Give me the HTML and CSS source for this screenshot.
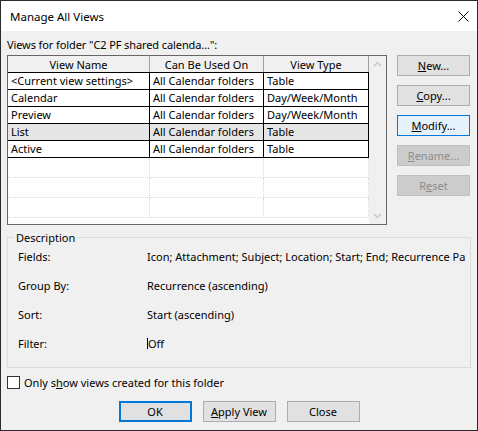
FILE: index.html
```html
<!DOCTYPE html>
<html>
<head>
    <title>Manage All Views</title>
    <link rel="stylesheet" href="styles.css">
</head>
<body>
    <div class="window">
        <div class="titlebar">
            <span class="title">Manage All Views</span>
            <svg class="close" width="11" height="11" viewBox="0 0 11 11">
                <path d="M0.5 0.5L10.5 10.5M10.5 0.5L0.5 10.5" stroke="#000" stroke-width="1" fill="none"/>
            </svg>
        </div>
        <div class="content">
            <div class="folder-label">Views for folder "C2 PF shared calenda…":</div>
            <div class="main">
                <div class="listbox">
                    <table class="views">
                        <thead>
                            <tr><th class="col-name">View Name</th><th class="col-used">Can Be Used On</th><th class="col-type">View Type</th></tr>
                        </thead>
                        <tbody>
                            <tr class="first"><td>&lt;Current view settings&gt;</td><td>All Calendar folders</td><td>Table</td></tr>
                            <tr><td>Calendar</td><td>All Calendar folders</td><td>Day/Week/Month</td></tr>
                            <tr><td>Preview</td><td>All Calendar folders</td><td>Day/Week/Month</td></tr>
                            <tr class="selected"><td>List</td><td>All Calendar folders</td><td>Table</td></tr>
                            <tr><td>Active</td><td>All Calendar folders</td><td>Table</td></tr>
                            <tr class="blank"><td></td><td></td><td></td></tr>
                            <tr class="blank"><td></td><td></td><td></td></tr>
                            <tr class="blank"><td></td><td></td><td></td></tr>
                        </tbody>
                    </table>
                    <div class="scrollbar">
                        <svg width="9" height="6" viewBox="0 0 9 6"><path d="M1 5L4.5 1.5L8 5" stroke="#c2c2c2" stroke-width="1.2" fill="none"/></svg>
                        <svg width="9" height="6" viewBox="0 0 9 6"><path d="M1 1L4.5 4.5L8 1" stroke="#c2c2c2" stroke-width="1.2" fill="none"/></svg>
                    </div>
                </div>
                <div class="side-buttons">
                    <button><u>N</u>ew...</button>
                    <button><u>C</u>opy...</button>
                    <button class="focused"><u>M</u>odify...</button>
                    <button disabled><u>R</u>ename...</button>
                    <button disabled>R<u>e</u>set</button>
                </div>
            </div>
            <div class="description">
                <div class="group-title">Description</div>
                <div class="desc-row"><span class="desc-label">Fields:</span><span class="desc-value">Icon; Attachment; Subject; Location; Start; End; Recurrence Pa</span></div>
                <div class="desc-row"><span class="desc-label">Group By:</span><span class="desc-value">Recurrence (ascending)</span></div>
                <div class="desc-row"><span class="desc-label">Sort:</span><span class="desc-value">Start (ascending)</span></div>
                <div class="desc-row"><span class="desc-label">Filter:</span><span class="desc-value"><span class="caret"></span>Off</span></div>
            </div>
            <label class="only-show"><span class="checkbox"></span>Only s<u>h</u>ow views created for this folder</label>
            <div class="footer">
                <button class="default">OK</button>
                <button><u>A</u>pply View</button>
                <button>Close</button>
            </div>
        </div>
    </div>
</body>
</html>
```
FILE: styles.css
```css
* {
    box-sizing: border-box;
}
body {
    margin: 0;
    font-family: "Noto Sans", sans-serif;
    font-size: 11px;
    color: #000;
}
.window {
    width: 478px;
    height: 431px;
    border: 1px solid #2b2b2b;
    background: #f0f0f0;
}
.titlebar {
    height: 30px;
    background: #fff;
    display: flex;
    align-items: center;
    justify-content: space-between;
    padding: 0 8px 0 9px;
    font-size: 11.5px;
}
.content {
    padding: 6px 6px 0 6px;
}
.folder-label {
    line-height: 15px;
    margin-bottom: 3px;
    letter-spacing: -0.1px;
}
.main {
    display: flex;
}
.listbox {
    width: 380px;
    height: 170px;
    border: 1px solid #666;
    background: #fff;
    display: flex;
    overflow: hidden;
}
.views {
    border-collapse: separate;
    border-spacing: 0;
    width: 361px;
    table-layout: fixed;
    align-self: flex-start;
}
.views th {
    height: 16px;
    padding: 0;
    font-weight: normal;
    background: #f0f0f0;
    border-right: 1px solid #a0a0a0;
    line-height: 15px;
    text-align: center;
}
.col-name { width: 142px; }
.col-used { width: 114px; }
.col-type { width: 105px; }
.views td {
    height: 17px;
    padding: 0 0 0 3px;
    line-height: 16px;
    border-right: 1px solid #000;
    border-bottom: 1px solid #000;
    white-space: nowrap;
    overflow: hidden;
}
.views tr.first td {
    height: 18px;
    border-top: 1px solid #000;
}
.views tr.selected td {
    background: #e5e5e5;
}
.views tr.blank td {
    height: 20px;
    border-right: 1px dotted #dadada;
    border-bottom: 1px dotted #dadada;
}
.scrollbar {
    width: 17px;
    background: #f0f0f0;
    display: flex;
    flex-direction: column;
    justify-content: space-between;
    align-items: center;
    padding: 5px 0 5px;
}
.side-buttons {
    margin-left: 10px;
    display: flex;
    flex-direction: column;
    gap: 9px;
}
button {
    width: 73px;
    height: 21px;
    padding: 0;
    background: #e1e1e1;
    border: 1px solid #adadad;
    font-family: inherit;
    font-size: 11px;
    color: #000;
}
button.focused {
    background: #e5f1fb;
    border-color: #0078d7;
}
button:disabled {
    background: #cccccc;
    border-color: #bfbfbf;
    color: #8d8d8d;
}
button.default {
    border: 2px solid #0078d7;
}
.description {
    margin-top: 12px;
    width: 464px;
    height: 131px;
    border: 1px solid #dcdcdc;
}
.group-title {
    width: max-content;
    margin: -8px 0 0 6px;
    padding: 0 2px;
    line-height: 15px;
    background: #f0f0f0;
}
.desc-row {
    display: flex;
    line-height: 15px;
    padding-left: 10px;
    margin-top: 14px;
    overflow: hidden;
}
.group-title + .desc-row {
    margin-top: 4px;
}
.desc-label {
    width: 129px;
    flex-shrink: 0;
}
.desc-value {
    white-space: nowrap;
    display: flex;
    align-items: center;
}
.caret {
    display: inline-block;
    width: 1px;
    height: 11px;
    background: #000;
}
.only-show {
    display: flex;
    align-items: center;
    margin-top: 8px;
    height: 13px;
    line-height: 13px;
}
.checkbox {
    width: 13px;
    height: 13px;
    border: 1px solid #333;
    background: #fff;
    margin-right: 4px;
}
.footer {
    display: flex;
    justify-content: center;
    gap: 11px;
    margin-top: 12px;
}
```
